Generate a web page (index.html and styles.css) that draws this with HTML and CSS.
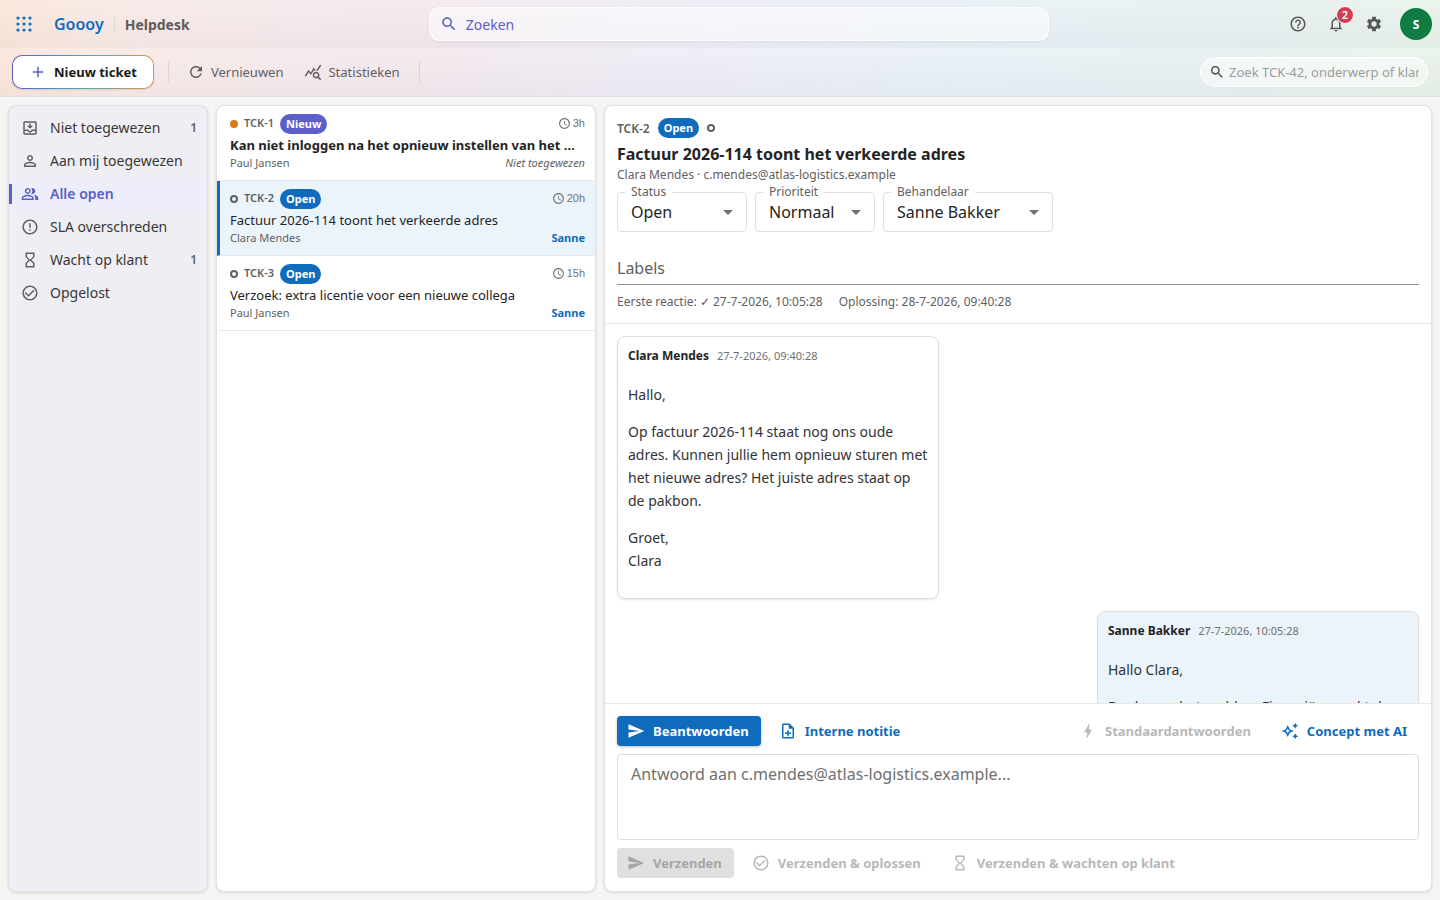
FILE: index.html
```html
<!DOCTYPE html>
<html lang="nl">
<head>
    <meta charset="UTF-8">
    <meta name="viewport" content="width=device-width, initial-scale=1.0">
    <title>Helpdesk - Goooy</title>
    <link rel="stylesheet" href="styles.css">
</head>
<body>
    <!-- Gedeelde iconen -->
    <svg class="icon-defs" aria-hidden="true">
        <symbol id="i-search" viewBox="0 0 24 24"><path d="M15.5 14h-.79l-.28-.27C15.41 12.59 16 11.11 16 9.5 16 5.91 13.09 3 9.5 3S3 5.91 3 9.5 5.91 16 9.5 16c1.61 0 3.09-.59 4.23-1.57l.27.28v.79l5 4.99L20.49 19zm-6 0C7.01 14 5 11.99 5 9.5S7.01 5 9.5 5 14 7.01 14 9.5 11.99 14 9.5 14"/></symbol>
        <symbol id="i-clock" viewBox="0 0 24 24"><path d="M11.99 2C6.47 2 2 6.48 2 12s4.47 10 9.99 10C17.52 22 22 17.52 22 12S17.52 2 11.99 2M12 20c-4.42 0-8-3.58-8-8s3.58-8 8-8 8 3.58 8 8-3.58 8-8 8m.5-13H11v6l5.25 3.15.75-1.23-4.5-2.67z"/></symbol>
        <symbol id="i-hourglass" viewBox="0 0 24 24"><path d="M6 2v6h.01L6 8.01 10 12l-4 4 .01.01H6V22h12v-5.99h-.01L18 16l-4-4 4-3.99-.01-.01H18V2zm10 14.5V20H8v-3.5l4-4zm-4-5-4-4V4h8v3.5z"/></symbol>
        <symbol id="i-check" viewBox="0 0 24 24"><path d="M16.59 7.58 10 14.17l-3.59-3.58L5 12l5 5 8-8zM12 2C6.48 2 2 6.48 2 12s4.48 10 10 10 10-4.48 10-10S17.52 2 12 2m0 18c-4.42 0-8-3.58-8-8s3.58-8 8-8 8 3.58 8 8-3.58 8-8 8"/></symbol>
        <symbol id="i-send" viewBox="0 0 24 24"><path d="M2.01 21 23 12 2.01 3 2 10l15 2-15 2z"/></symbol>
    </svg>

    <div class="app">
        <div class="app-top">
            <header class="topbar">
                <div class="brand">
                    <button class="icon-btn apps-btn" aria-label="Apps">
                        <svg class="icon-apps" viewBox="0 0 16 16"><circle cx="2" cy="2" r="1.6"/><circle cx="8" cy="2" r="1.6"/><circle cx="14" cy="2" r="1.6"/><circle cx="2" cy="8" r="1.6"/><circle cx="8" cy="8" r="1.6"/><circle cx="14" cy="8" r="1.6"/><circle cx="2" cy="14" r="1.6"/><circle cx="8" cy="14" r="1.6"/><circle cx="14" cy="14" r="1.6"/></svg>
                    </button>
                    <a href="#" class="logo">Goooy</a>
                    <span class="brand-app">Helpdesk</span>
                </div>
                <button class="global-search">
                    <svg class="icon"><use href="#i-search"/></svg>
                    Zoeken
                </button>
                <div class="top-actions">
                    <button class="icon-btn" aria-label="Help">
                        <svg class="icon" viewBox="0 0 24 24"><path d="M11 18h2v-2h-2zm1-16C6.48 2 2 6.48 2 12s4.48 10 10 10 10-4.48 10-10S17.52 2 12 2m0 18c-4.41 0-8-3.59-8-8s3.59-8 8-8 8 3.59 8 8-3.59 8-8 8m0-14c-2.21 0-4 1.79-4 4h2c0-1.1.9-2 2-2s2 .9 2 2c0 2-3 1.75-3 5h2c0-2.25 3-2.5 3-5 0-2.21-1.79-4-4-4"/></svg>
                    </button>
                    <button class="icon-btn" aria-label="Meldingen">
                        <svg class="icon" viewBox="0 0 24 24"><path d="M12 22c1.1 0 2-.9 2-2h-4c0 1.1.9 2 2 2m6-6v-5c0-3.07-1.63-5.64-4.5-6.32V4c0-.83-.67-1.5-1.5-1.5s-1.5.67-1.5 1.5v.68C7.64 5.36 6 7.92 6 11v5l-2 2v1h16v-1zm-2 1H8v-6c0-2.48 1.51-4.5 4-4.5s4 2.02 4 4.5z"/></svg>
                        <span class="badge">2</span>
                    </button>
                    <button class="icon-btn" aria-label="Instellingen">
                        <svg class="icon" viewBox="0 0 24 24"><path d="M19.14 12.94c.04-.3.06-.61.06-.94 0-.32-.02-.64-.07-.94l2.03-1.58c.18-.14.23-.41.12-.61l-1.92-3.32c-.12-.22-.37-.29-.59-.22l-2.39.96c-.5-.38-1.03-.7-1.62-.94l-.36-2.54c-.04-.24-.24-.41-.48-.41h-3.84c-.24 0-.43.17-.47.41l-.36 2.54c-.59.24-1.13.57-1.62.94l-2.39-.96c-.22-.08-.47 0-.59.22L2.74 8.87c-.12.21-.08.47.12.61l2.03 1.58c-.05.3-.09.63-.09.94s.02.64.07.94l-2.03 1.58c-.18.14-.23.41-.12.61l1.92 3.32c.12.22.37.29.59.22l2.39-.96c.5.38 1.03.7 1.62.94l.36 2.54c.05.24.24.41.48.41h3.84c.24 0 .44-.17.47-.41l.36-2.54c.59-.24 1.13-.56 1.62-.94l2.39.96c.22.08.47 0 .59-.22l1.92-3.32c.12-.22.07-.47-.12-.61zM12 15.6c-1.98 0-3.6-1.62-3.6-3.6s1.62-3.6 3.6-3.6 3.6 1.62 3.6 3.6-1.62 3.6-3.6 3.6"/></svg>
                    </button>
                    <button class="avatar" aria-label="Profiel">S</button>
                </div>
            </header>

            <div class="toolbar">
                <button class="new-ticket">
                    <svg class="icon" viewBox="0 0 24 24"><path d="M19 13h-6v6h-2v-6H5v-2h6V5h2v6h6z"/></svg>
                    Nieuw ticket
                </button>
                <span class="divider"></span>
                <button class="tool-btn">
                    <svg class="icon" viewBox="0 0 24 24"><path d="M17.65 6.35C16.2 4.9 14.21 4 12 4c-4.42 0-7.99 3.58-7.99 8s3.57 8 7.99 8c3.73 0 6.84-2.55 7.73-6h-2.08c-.82 2.33-3.04 4-5.65 4-3.31 0-6-2.69-6-6s2.69-6 6-6c1.66 0 3.14.69 4.22 1.78L13 11h7V4z"/></svg>
                    Vernieuwen
                </button>
                <button class="tool-btn">
                    <svg class="icon" viewBox="0 0 24 24"><path d="M19.88 18.47c.44-.7.7-1.51.7-2.39 0-2.49-2.01-4.5-4.5-4.5s-4.5 2.01-4.5 4.5 2.01 4.5 4.49 4.5c.88 0 1.7-.26 2.39-.7L21.58 23 23 21.58zm-3.8.11c-1.38 0-2.5-1.12-2.5-2.5s1.12-2.5 2.5-2.5 2.5 1.12 2.5 2.5-1.12 2.5-2.5 2.5m-.36-8.5c-.74.02-1.45.18-2.1.45l-.55-.83-3.8 6.18-3.01-3.52-3.63 5.81L1 17l5-8 3 3.5L13 6zm2.59.5c-.64-.28-1.33-.45-2.05-.49L21.38 2 23 3.18z"/></svg>
                    Statistieken
                </button>
                <span class="divider"></span>
                <label class="ticket-search">
                    <svg class="icon-sm"><use href="#i-search"/></svg>
                    <input type="text" placeholder="Zoek TCK-42, onderwerp of klant" aria-label="Zoek ticket">
                </label>
            </div>
        </div>

        <main class="workspace">
            <nav class="panel sidebar">
                <a href="#" class="nav-item">
                    <svg class="icon" viewBox="0 0 24 24"><path d="M19 3H5c-1.1 0-2 .9-2 2v14c0 1.1.9 2 2 2h14c1.1 0 2-.9 2-2V5c0-1.1-.9-2-2-2m0 16H5v-3h3.56c.69 1.19 1.97 2 3.45 2s2.75-.81 3.45-2H19zm0-5h-4.99c0 1.1-.9 2-2 2s-2-.9-2-2H5V5h14zm-3-5h-3V6h-2v3H8l4 4z"/></svg>
                    Niet toegewezen
                    <span class="count">1</span>
                </a>
                <a href="#" class="nav-item">
                    <svg class="icon" viewBox="0 0 24 24"><path d="M12 5.9c1.16 0 2.1.94 2.1 2.1s-.94 2.1-2.1 2.1S9.9 9.16 9.9 8s.94-2.1 2.1-2.1m0 9c2.97 0 6.1 1.46 6.1 2.1v1.1H5.9V17c0-.64 3.13-2.1 6.1-2.1M12 4C9.79 4 8 5.79 8 8s1.79 4 4 4 4-1.79 4-4-1.79-4-4-4m0 9c-2.67 0-8 1.34-8 4v3h16v-3c0-2.66-5.33-4-8-4"/></svg>
                    Aan mij toegewezen
                </a>
                <a href="#" class="nav-item active">
                    <svg class="icon" viewBox="0 0 24 24"><path d="M16.67 13.13C18.04 14.06 19 15.32 19 17v3h4v-3c0-2.18-3.57-3.47-6.33-3.87M15 12c2.21 0 4-1.79 4-4s-1.79-4-4-4c-.47 0-.91.1-1.33.24C14.5 5.27 15 6.58 15 8s-.5 2.73-1.33 3.76c.42.14.86.24 1.33.24m-6 0c2.21 0 4-1.79 4-4s-1.79-4-4-4-4 1.79-4 4 1.79 4 4 4m0-6c1.1 0 2 .9 2 2s-.9 2-2 2-2-.9-2-2 .9-2 2-2m0 7c-2.67 0-8 1.34-8 4v3h16v-3c0-2.66-5.33-4-8-4m6 5H3v-.99C3.2 16.29 6.3 15 9 15s5.8 1.29 6 2z"/></svg>
                    Alle open
                </a>
                <a href="#" class="nav-item">
                    <svg class="icon" viewBox="0 0 24 24"><path d="M11 15h2v2h-2zm0-8h2v6h-2zm.99-5C6.47 2 2 6.48 2 12s4.47 10 9.99 10C17.52 22 22 17.52 22 12S17.52 2 11.99 2M12 20c-4.42 0-8-3.58-8-8s3.58-8 8-8 8 3.58 8 8-3.58 8-8 8"/></svg>
                    SLA overschreden
                </a>
                <a href="#" class="nav-item">
                    <svg class="icon"><use href="#i-hourglass"/></svg>
                    Wacht op klant
                    <span class="count">1</span>
                </a>
                <a href="#" class="nav-item">
                    <svg class="icon"><use href="#i-check"/></svg>
                    Opgelost
                </a>
            </nav>

            <section class="panel ticket-list">
                <a href="#" class="ticket unread">
                    <div class="ticket-row">
                        <span class="prio prio-high"></span>
                        <span class="ticket-id">TCK-1</span>
                        <span class="chip chip-new">Nieuw</span>
                        <span class="age"><svg class="icon-xs"><use href="#i-clock"/></svg>3h</span>
                    </div>
                    <div class="ticket-subject">Kan niet inloggen na het opnieuw instellen van het wachtwoord</div>
                    <div class="ticket-meta"><span>Paul Jansen</span><em>Niet toegewezen</em></div>
                </a>
                <a href="#" class="ticket selected">
                    <div class="ticket-row">
                        <span class="prio"></span>
                        <span class="ticket-id">TCK-2</span>
                        <span class="chip">Open</span>
                        <span class="age"><svg class="icon-xs"><use href="#i-clock"/></svg>20h</span>
                    </div>
                    <div class="ticket-subject">Factuur 2026-114 toont het verkeerde adres</div>
                    <div class="ticket-meta"><span>Clara Mendes</span><strong>Sanne</strong></div>
                </a>
                <a href="#" class="ticket">
                    <div class="ticket-row">
                        <span class="prio"></span>
                        <span class="ticket-id">TCK-3</span>
                        <span class="chip">Open</span>
                        <span class="age"><svg class="icon-xs"><use href="#i-clock"/></svg>15h</span>
                    </div>
                    <div class="ticket-subject">Verzoek: extra licentie voor een nieuwe collega</div>
                    <div class="ticket-meta"><span>Paul Jansen</span><strong>Sanne</strong></div>
                </a>
            </section>

            <section class="panel detail">
                <div class="detail-head">
                    <div class="detail-row">
                        <span class="detail-id">TCK-2</span>
                        <span class="chip">Open</span>
                        <span class="prio"></span>
                    </div>
                    <h1>Factuur 2026-114 toont het verkeerde adres</h1>
                    <div class="requester">Clara Mendes · c.mendes@atlas-logistics.example</div>
                    <div class="fields">
                        <div class="field field-status">
                            <label for="status">Status</label>
                            <select id="status"><option>Open</option></select>
                        </div>
                        <div class="field field-prio">
                            <label for="prioriteit">Prioriteit</label>
                            <select id="prioriteit"><option>Normaal</option></select>
                        </div>
                        <div class="field field-agent">
                            <label for="behandelaar">Behandelaar</label>
                            <select id="behandelaar"><option>Sanne Bakker</option></select>
                        </div>
                    </div>
                    <input type="text" class="labels-input" placeholder="Labels" aria-label="Labels">
                    <div class="sla">
                        <span>Eerste reactie: ✓ 27-7-2026, 10:05:28</span>
                        <span>Oplossing: 28-7-2026, 09:40:28</span>
                    </div>
                </div>

                <div class="thread">
                    <article class="message">
                        <div class="message-head"><strong>Clara Mendes</strong><time>27-7-2026, 09:40:28</time></div>
                        <p>Hallo,</p>
                        <p>Op factuur 2026-114 staat nog ons oude adres. Kunnen jullie hem opnieuw sturen met het nieuwe adres? Het juiste adres staat op de pakbon.</p>
                        <p>Groet,<br>Clara</p>
                    </article>
                    <article class="message message-agent">
                        <div class="message-head"><strong>Sanne Bakker</strong><time>27-7-2026, 10:05:28</time></div>
                        <p>Hallo Clara,</p>
                        <p>Dank voor het melden. Financiën maakt de</p>
                    </article>
                </div>

                <div class="composer">
                    <div class="composer-row">
                        <button class="btn btn-primary"><svg class="icon"><use href="#i-send"/></svg>Beantwoorden</button>
                        <button class="btn"><svg class="icon" viewBox="0 0 24 24"><path d="M13 11h-2v3H8v2h3v3h2v-3h3v-2h-3zm1-9H6c-1.1 0-2 .9-2 2v16c0 1.1.89 2 1.99 2H18c1.1 0 2-.9 2-2V8zm4 18H6V4h7v5h5z"/></svg>Interne notitie</button>
                        <span class="spacer"></span>
                        <button class="btn" disabled><svg class="icon" viewBox="0 0 24 24"><path d="M11 21h-1l1-7H7.5c-.58 0-.57-.32-.38-.66s.05-.08.07-.12C8.48 10.94 10.42 7.54 13 3h1l-1 7h3.5c.49 0 .56.33.47.51l-.07.15C12.96 17.55 11 21 11 21"/></svg>Standaardantwoorden</button>
                        <button class="btn"><svg class="icon" viewBox="0 0 24 24"><path d="m19 9 1.25-2.75L23 5l-2.75-1.25L19 1l-1.25 2.75L15 5l2.75 1.25zm0 6-1.25 2.75L15 19l2.75 1.25L19 23l1.25-2.75L23 19l-2.75-1.25zm-7.5-5.5L9 4 6.5 9.5 1 12l5.5 2.5L9 20l2.5-5.5L17 12zm-1.51 3.49L9 15.17l-.99-2.18L5.83 12l2.18-.99L9 8.83l.99 2.18 2.18.99z"/></svg>Concept met AI</button>
                    </div>
                    <textarea class="reply" placeholder="Antwoord aan c.mendes@atlas-logistics.example..." aria-label="Antwoord"></textarea>
                    <div class="composer-row">
                        <button class="btn btn-primary" disabled><svg class="icon"><use href="#i-send"/></svg>Verzenden</button>
                        <button class="btn" disabled><svg class="icon"><use href="#i-check"/></svg>Verzenden &amp; oplossen</button>
                        <button class="btn" disabled><svg class="icon"><use href="#i-hourglass"/></svg>Verzenden &amp; wachten op klant</button>
                    </div>
                </div>
            </section>
        </main>
    </div>
</body>
</html>
```
FILE: styles.css
```css
* {
    box-sizing: border-box;
}
body {
    margin: 0;
    font-family: "Noto Sans", sans-serif;
    font-size: 14px;
    color: #242424;
    background-color: #f5f5f5;
}
button, input, select, textarea {
    font-family: inherit;
}
button {
    border: none;
    background: none;
    padding: 0;
    cursor: pointer;
}
a {
    color: inherit;
    text-decoration: none;
}
svg {
    fill: currentColor;
    flex-shrink: 0;
}
.icon-defs {
    display: none;
}
.icon {
    width: 18px;
    height: 18px;
}
.icon-sm {
    width: 16px;
    height: 16px;
}
.icon-xs {
    width: 13px;
    height: 13px;
}
.app {
    display: flex;
    flex-direction: column;
    height: 100vh;
}

/* Bovenbalken */
.app-top {
    background: linear-gradient(100deg, #fae3d5 0%, #f6e7e5 10%, #f2e6ec 30%, #ebebf7 50%, #e5eff5 68%, #e4eef0 85%, #e6f1e6 100%);
    border-bottom: 1px solid #e0dfe0;
}
.topbar, .toolbar {
    display: flex;
    align-items: center;
    height: 48px;
    background: linear-gradient(rgba(255, 255, 255, 0.2), rgba(200, 200, 205, 0.1));
}
.topbar {
    justify-content: space-between;
    padding: 0 8px;
}
.brand {
    display: flex;
    align-items: center;
}
.icon-btn {
    display: flex;
    align-items: center;
    justify-content: center;
    position: relative;
    width: 32px;
    height: 32px;
    color: #58595b;
}
.apps-btn {
    color: #0f6cbd;
}
.icon-apps {
    width: 16px;
    height: 16px;
}
.logo {
    margin-left: 14px;
    padding-right: 10px;
    border-right: 1px solid #dfd6d6;
    font-size: 16px;
    line-height: 16px;
    font-weight: 600;
    color: #0f6cbd;
}
.brand-app {
    padding: 0 6px 0 10px;
    font-size: 14px;
    font-weight: 700;
    color: #615b5b;
}
.global-search {
    display: flex;
    align-items: center;
    gap: 8px;
    width: 620px;
    height: 34px;
    padding: 0 10px;
    border: 1px solid rgba(255, 255, 255, 0.7);
    border-radius: 10px;
    background-color: rgba(255, 255, 255, 0.5);
    box-shadow: 0 1px 3px rgba(0, 0, 0, 0.06);
    font-size: 14px;
    color: #5b5fc7;
}
.top-actions {
    display: flex;
    align-items: center;
    gap: 6px;
}
.badge {
    position: absolute;
    top: -2px;
    right: -2px;
    width: 18px;
    height: 18px;
    border: 1px solid #fff;
    border-radius: 50%;
    background-color: #d13f52;
    color: #fff;
    font-size: 11px;
    line-height: 16px;
    font-weight: 600;
    text-align: center;
}
.avatar {
    width: 32px;
    height: 32px;
    margin-left: 4px;
    border-radius: 50%;
    background-color: #107c41;
    color: #fff;
    font-size: 12px;
    font-weight: 700;
}
.toolbar {
    padding: 0 12px;
}
.new-ticket {
    display: flex;
    align-items: center;
    gap: 7px;
    height: 34px;
    margin-right: 6px;
    padding: 0 16px;
    border: 1px solid transparent;
    border-radius: 10px;
    background: linear-gradient(#fff, #fff) padding-box, linear-gradient(100deg, #5b5fc7, #4fa8b8 50%, #e0954a) border-box;
    box-shadow: 0 1px 2px rgba(0, 0, 0, 0.1);
    font-size: 13px;
    font-weight: 700;
    color: #1a1a1a;
}
.new-ticket .icon {
    color: #5b5fc7;
}
.divider {
    width: 1px;
    height: 20px;
    margin: 0 8px;
    background-color: #ddd3d6;
}
.tool-btn {
    display: flex;
    align-items: center;
    gap: 6px;
    padding: 0 11px 0 10px;
    font-size: 13px;
    color: #616161;
}
.ticket-search {
    display: flex;
    align-items: center;
    gap: 4px;
    width: 228px;
    height: 30px;
    margin-left: auto;
    padding: 0 8px;
    border: 1px solid rgba(255, 255, 255, 0.7);
    border-radius: 15px;
    background-color: rgba(255, 255, 255, 0.5);
    color: #424242;
}
.ticket-search input {
    flex: 1;
    min-width: 0;
    padding: 0;
    border: none;
    outline: none;
    background: none;
    font-size: 13px;
}
.ticket-search input::placeholder {
    color: #9a9d9c;
}

/* Werkruimte */
.workspace {
    display: grid;
    grid-template-columns: 200px 380px minmax(0, 1fr);
    gap: 8px;
    flex: 1;
    min-height: 0;
    padding: 8px;
}
.panel {
    border: 1px solid #e2e2e2;
    border-radius: 8px;
    background-color: #fff;
    box-shadow: 0 1px 3px rgba(0, 0, 0, 0.12);
    overflow: hidden;
    min-height: 0;
}
.sidebar {
    padding-top: 5px;
    background-color: #efeef5;
}
.nav-item {
    display: flex;
    align-items: center;
    gap: 11px;
    height: 33px;
    padding: 0 10px 0 12px;
    font-size: 14px;
    color: #383838;
}
.nav-item .icon {
    color: #616161;
}
.nav-item.active {
    padding-left: 9px;
    background: linear-gradient(#5b5fc7, #5b5fc7) left center / 3px 20px no-repeat, #edeef9;
    border-left: 3px solid transparent;
    background-origin: border-box;
    font-weight: 600;
    color: #5b5fc7;
}
.nav-item.active .icon {
    color: #5b5fc7;
}
.count {
    margin-left: auto;
    font-size: 12px;
    font-weight: 600;
    color: #616161;
}
.ticket {
    display: block;
    height: 75px;
    padding: 8px 10px;
    border-left: 3px solid transparent;
    border-bottom: 1px solid #e8e8e8;
}
.ticket.selected {
    border-left-color: #0f6cbd;
    background-color: #ebf3fb;
}
.ticket-row, .detail-row {
    display: flex;
    align-items: center;
    gap: 6px;
    height: 20px;
}
.prio {
    width: 8px;
    height: 8px;
    border: 2px solid #616161;
    border-radius: 50%;
}
.prio-high {
    border-color: #d9790f;
    background-color: #d9790f;
}
.ticket-id, .age {
    align-self: flex-start;
    font-size: 11px;
    line-height: 18px;
}
.ticket-id {
    font-weight: 600;
    color: #616161;
}
.chip {
    height: 20px;
    padding: 0 6px;
    border-radius: 10px;
    background-color: #0f6cbd;
    color: #fff;
    font-size: 11px;
    line-height: 20px;
    font-weight: 700;
}
.chip-new {
    background-color: #5b5fc7;
}
.age {
    display: flex;
    align-items: center;
    gap: 2px;
    margin-left: auto;
    font-family: "Liberation Sans", sans-serif;
    color: #707070;
}
.ticket-subject {
    margin-top: 1px;
    font-size: 13px;
    line-height: 20px;
    white-space: nowrap;
    overflow: hidden;
    text-overflow: ellipsis;
}
.unread .ticket-subject {
    font-weight: 700;
}
.ticket-meta {
    display: flex;
    justify-content: space-between;
    font-size: 11px;
    line-height: 16px;
    color: #616161;
}
.ticket-meta strong {
    font-weight: 700;
    color: #0f6cbd;
}

/* Ticketdetail */
.detail {
    display: flex;
    flex-direction: column;
}
.detail-head {
    padding: 12px;
    border-bottom: 1px solid #e8e8e8;
}
.detail-row {
    gap: 8px;
}
.detail-id {
    font-size: 12px;
    font-weight: 600;
    color: #616161;
}
h1 {
    margin: 4px 0 0;
    font-size: 16px;
    line-height: 24px;
    font-weight: 700;
}
.requester {
    font-size: 12px;
    line-height: 18px;
    color: #616161;
}
.fields {
    display: flex;
    gap: 8px;
    margin-top: 8px;
}
.field {
    position: relative;
}
.field label {
    position: absolute;
    top: -9px;
    left: 8px;
    padding: 0 6px;
    background-color: #fff;
    font-size: 12px;
    line-height: 18px;
    color: #616161;
}
.field select {
    width: 100%;
    height: 40px;
    padding: 0 32px 0 13px;
    border: 1px solid #e0e0e0;
    border-radius: 4px;
    appearance: none;
    background: url("data:image/svg+xml,%3Csvg xmlns='http://www.w3.org/2000/svg' viewBox='0 0 10 5'%3E%3Cpath d='M0 0h10L5 5z' fill='%23707070'/%3E%3C/svg%3E") right 13px center / 10px 5px no-repeat #fff;
    font-size: 16px;
    color: #242424;
}
.field-status {
    width: 130px;
}
.field-prio {
    width: 120px;
}
.field-agent {
    width: 170px;
}
.labels-input {
    display: block;
    width: 100%;
    height: 33px;
    margin-top: 20px;
    padding: 0;
    border: none;
    border-bottom: 1px solid #949494;
    outline: none;
    font-size: 16px;
}
.labels-input::placeholder {
    color: #616161;
}
.sla {
    display: flex;
    gap: 16px;
    margin-top: 8px;
    font-size: 12px;
    line-height: 18px;
    color: #616161;
}
.thread {
    display: flex;
    flex-direction: column;
    gap: 12px;
    flex: 1;
    min-height: 0;
    padding: 12px;
    overflow: hidden;
}
.message {
    flex-shrink: 0;
    width: 322px;
    padding: 10px 10px 12px;
    border: 1px solid #dedede;
    border-radius: 8px;
    box-shadow: 0 1px 2px rgba(0, 0, 0, 0.1);
}
.message-agent {
    align-self: flex-end;
    background-color: #ebf3fb;
}
.message-head {
    display: flex;
    align-items: center;
    gap: 8px;
    margin-bottom: 18px;
    font-size: 12px;
    line-height: 18px;
}
.message-head strong {
    font-weight: 700;
}
.message-head time {
    font-size: 11px;
    color: #707070;
}
.message p {
    margin: 14px 0;
    line-height: 23px;
    color: #333;
}
.composer {
    display: flex;
    flex-direction: column;
    gap: 8px;
    padding: 12px 12px 13px;
    border-top: 1px solid #e8e8e8;
}
.composer-row {
    display: flex;
    align-items: center;
    gap: 8px;
}
.spacer {
    flex: 1;
}
.btn {
    display: flex;
    align-items: center;
    gap: 8px;
    height: 30px;
    padding: 0 12px 0 10px;
    border-radius: 4px;
    font-size: 13px;
    font-weight: 700;
    color: #0f6cbd;
}
.btn-primary {
    background-color: #0f6cbd;
    color: #fff;
    box-shadow: 0 1px 3px rgba(0, 0, 0, 0.25);
}
.btn:disabled {
    color: #b8b8b8;
    box-shadow: none;
    cursor: default;
}
.btn-primary:disabled {
    background-color: #e0e0e0;
    color: #a6a6a6;
}
.reply {
    display: block;
    height: 86px;
    padding: 8px 13px;
    border: 1px solid #dcdcdc;
    border-radius: 4px;
    outline: none;
    resize: none;
    font-size: 16px;
    line-height: 23px;
}
.reply::placeholder {
    color: #707070;
}
```
